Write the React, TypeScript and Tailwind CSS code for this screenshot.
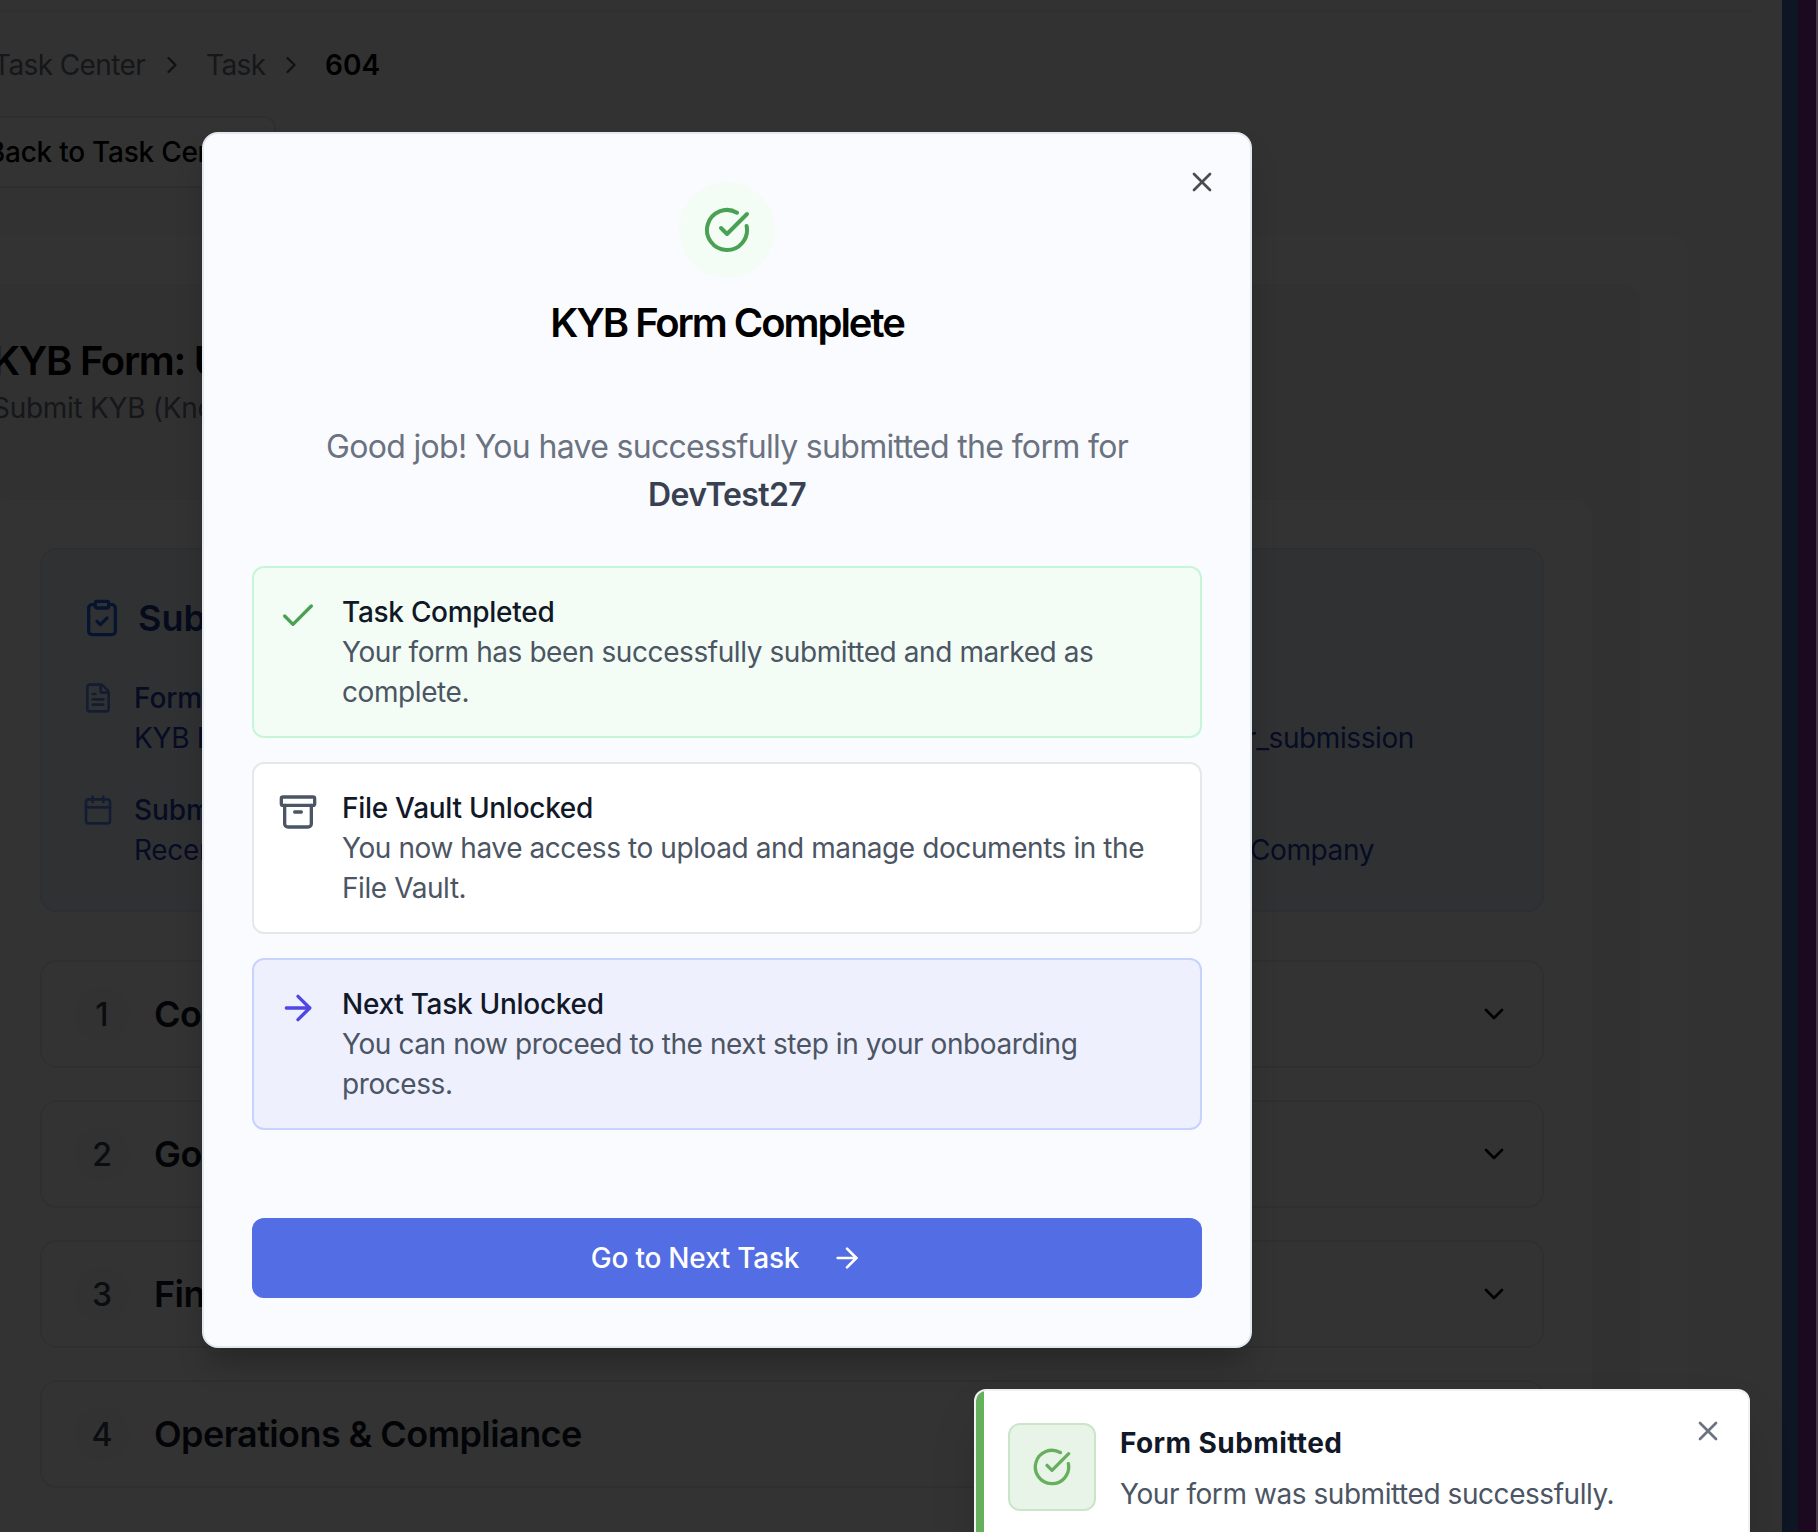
import React from 'react';
import {
  Archive,
  ArrowRight,
  Calendar,
  Check,
  ChevronDown,
  ChevronRight,
  CircleCheckBig,
  ClipboardCheck,
  FileText,
  X,
} from 'lucide-react';

const sections = [
  { n: 1, title: 'Company Profile' },
  { n: 2, title: 'Governance & Leadership' },
  { n: 3, title: 'Financial Profile' },
  { n: 4, title: 'Operations & Compliance' },
];

const outcomes = [
  {
    title: 'Task Completed',
    text: 'Your form has been successfully submitted and marked as complete.',
    box: 'border-[#c6f6d5] bg-[#f3fdf5]',
    icon: <Check className="mt-1 size-10 shrink-0 text-[#4aa154]" />,
  },
  {
    title: 'File Vault Unlocked',
    text: 'You now have access to upload and manage documents in the File Vault.',
    box: 'border-[#e5e7eb] bg-white',
    icon: <Archive className="mt-1 size-10 shrink-0 text-[#4b5563]" />,
  },
  {
    title: 'Next Task Unlocked',
    text: 'You can now proceed to the next step in your onboarding process.',
    box: 'border-[#c7d2fe] bg-[#eef0fe]',
    icon: <ArrowRight className="mt-1 size-10 shrink-0 text-[#4f46e5]" />,
  },
];

function Detail({ icon, label, value }: { icon: React.ReactNode; label: string; value: string }) {
  return (
    <div className="flex items-start gap-5">
      <span className="mt-1 size-8 shrink-0 text-[#2563eb] opacity-70">{icon}</span>
      <div className="whitespace-nowrap text-[28px] leading-10">
        <p className="font-medium tracking-[-0.1px] text-[#1e40af]">{label}</p>
        <p className="tracking-[-0.3px] text-[#1d3fb0]">{value}</p>
      </div>
    </div>
  );
}

function Page() {
  return (
    <div className="flex h-full">
      <main className="w-[1782px] overflow-hidden bg-[#f9fafb]">
        <div className="mr-[30px] h-3 border-b-2 border-[#ebecef]" />
        <nav className="-ml-[7px] flex h-[104px] items-center whitespace-nowrap pt-px text-[28px] tracking-[-0.6px] text-[#6b7280]">
          <span className="w-[152px] shrink-0">Task Center</span>
          <ChevronRight className="ml-[13px] size-7 text-[#4b5563]" />
          <span className="ml-[20px] w-[58px]">Task</span>
          <ChevronRight className="ml-[13px] size-7 text-[#4b5563]" />
          <span className="ml-[20px] font-semibold tracking-normal text-black">604</span>
        </nav>
        <button className="-ml-[60px] flex h-[72px] w-[336px] items-center justify-end whitespace-nowrap rounded-xl border-2 border-[#e5e7eb] bg-white pr-[24px] text-[28px] font-medium tracking-[-0.25px] text-black">
          Back to Task Center
        </button>
        <section className="-ml-[104px] mt-12 h-[1400px] w-[1793px] rounded-[20px] bg-[#fefefe] pl-12 pr-[49px] pt-12">
          <div className="h-[1400px] rounded-2xl bg-[#f4f5f6] px-12">
            <header className="h-[216px] pt-[49px]">
              <h1 className="text-[40px] font-semibold leading-[56px] tracking-[-1.3px] text-black">
                KYB Form: Unlocked
              </h1>
              <p className="-mt-px whitespace-nowrap text-[28px] leading-10 tracking-[-0.3px] text-[#6b7280]">
                Submit KYB (Know Your Business) form
              </p>
            </header>
            <div className="h-[1200px] rounded-2xl bg-white px-12 pt-12">
              <div className="h-[364px] rounded-2xl border-2 border-[#dbeafe] bg-[#eff6ff] p-10">
                <div className="flex h-14 items-center gap-4">
                  <ClipboardCheck className="size-10 text-[#2563eb]" />
                  <h2 className="text-[36px] font-semibold text-[#1e3a8a]">Submission Details</h2>
                </div>
                <div className="mt-8 grid grid-cols-2 gap-8">
                  <Detail icon={<FileText className="size-8" />} label="Form Type" value="KYB Form" />
                  <div className="pr-[88px] text-right text-[28px] leading-10 tracking-[-0.4px] text-[#1d3fb0]">
                    <p className="mt-10">company_onboarding_user_submission</p>
                  </div>
                  <Detail icon={<Calendar className="size-8" />} label="Submission Date" value="Recently submitted" />
                  <div className="pr-[128px] text-right text-[28px] leading-10 tracking-[-0.4px] text-[#1d3fb0]">
                    <p className="mt-10">Company</p>
                  </div>
                </div>
              </div>
              <div className="mt-12 flex flex-col gap-8">
                {sections.map((s) => (
                  <div
                    key={s.n}
                    className="flex h-[108px] items-center gap-6 rounded-2xl border-2 border-[#ebecef] bg-white px-8"
                  >
                    <span className="flex size-14 items-center justify-center rounded-full bg-[#fafafb] pt-0.5 text-[32px] font-medium text-[#374151]">
                      {s.n}
                    </span>
                    <h3 className="flex-1 text-[36px] font-semibold tracking-[-0.58px] text-[#111827]">{s.title}</h3>
                    <ChevronDown className="size-8 text-black" />
                  </div>
                ))}
              </div>
            </div>
          </div>
        </section>
      </main>
      <div className="w-4 bg-[#466aad]" />
      <div className="w-[18px] bg-[#87329b]" />
      <div className="w-0.5 bg-[#4b3850]" />
    </div>
  );
}

function Modal() {
  return (
    <div
      role="dialog"
      className="absolute left-[202px] top-[132px] h-[1216px] w-[1050px] rounded-2xl border-2 border-[#e2e8f0] bg-[#fafbff] p-12 shadow-[0_20px_30px_-6px_rgba(0,0,0,0.25)]"
    >
      <X className="absolute right-8 top-8 size-8 text-[#4b4c4e]" />
      <div className="flex flex-col items-center">
        <div className="flex size-24 items-center justify-center rounded-full bg-[#f3fdf5]">
          <CircleCheckBig className="size-12 text-[#4aa154]" />
        </div>
        <h2 className="mt-[17px] text-[40px] font-semibold leading-[56px] tracking-[-2.05px] text-black">
          KYB Form Complete
        </h2>
      </div>
      <p className="mt-[72px] text-center text-[32px] leading-[48px] tracking-[-0.68px] text-[#6b7280]">
        Good job! You have successfully submitted the form for
        <br />
        <span className="font-semibold text-[#374151]">DevTest27</span>
      </p>
      <div className="mt-[47px] flex flex-col gap-6">
        {outcomes.map((o) => (
          <div key={o.title} className={`flex h-[172px] gap-6 rounded-xl border-2 p-6 ${o.box}`}>
            {o.icon}
            <div className="text-[28px] leading-10">
              <p className="font-medium tracking-[-0.29px] text-[#111827]">{o.title}</p>
              <p className="tracking-[-0.42px] text-[#4b5563]">{o.text}</p>
            </div>
          </div>
        ))}
      </div>
      <button className="mt-[88px] flex h-20 w-full items-center justify-center gap-8 rounded-xl bg-[#536de4] text-[28px] font-medium tracking-[-0.23px] text-white">
        Go to Next Task
        <ArrowRight className="size-8" />
      </button>
    </div>
  );
}

function Toast() {
  return (
    <div className="absolute left-[974px] top-[1389px] flex h-[170px] w-[776px] overflow-hidden rounded-xl border-2 border-[#f0f1f2] bg-white shadow-2xl">
      <div className="w-2 bg-[#66af5d]" />
      <div className="ml-6 mt-8 flex size-[88px] items-center justify-center rounded-xl border-2 border-[#cbe5c9] bg-[#e9f4e9]">
        <CircleCheckBig className="size-10 text-[#66af5d]" />
      </div>
      <div className="ml-6 mt-8 text-[28px]">
        <p className="leading-10 font-bold tracking-[0.4px] text-[#111827]">Form Submitted</p>
        <p className="mt-[11px] leading-10 tracking-[-0.44px] text-[#4b5563]">Your form was submitted successfully.</p>
      </div>
      <X className="absolute right-6 top-6 size-8 text-[#6b7280]" />
    </div>
  );
}

export default function App() {
  return (
    <div className="relative h-[1532px] w-[1818px] overflow-hidden font-['Inter',sans-serif]">
      <Page />
      <div className="absolute inset-y-0 left-0 right-0.5 bg-black/80" />
      <Modal />
      <Toast />
    </div>
  );
}
